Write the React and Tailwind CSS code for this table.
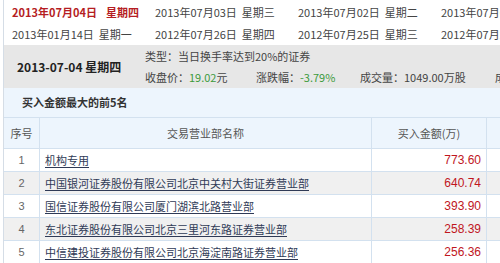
import React from "react";

const dates = [
  [
    { d: "2013年07月04日", w: "星期四", active: true },
    { d: "2013年07月03日", w: "星期三" },
    { d: "2013年07月02日", w: "星期二" },
    { d: "2013年07月01日", w: "星期一" },
  ],
  [
    { d: "2013年01月14日", w: "星期一" },
    { d: "2012年07月26日", w: "星期四" },
    { d: "2012年07月25日", w: "星期三" },
    { d: "2012年07月24日", w: "星期二" },
  ],
];

const rows = [
  { no: 1, name: "机构专用", amount: "773.60" },
  { no: 2, name: "中国银河证券股份有限公司北京中关村大街证券营业部", amount: "640.74" },
  { no: 3, name: "国信证券股份有限公司厦门湖滨北路营业部", amount: "393.90" },
  { no: 4, name: "东北证券股份有限公司北京三里河东路证券营业部", amount: "258.39" },
  { no: 5, name: "中信建投证券股份有限公司北京海淀南路证券营业部", amount: "256.36" },
];

export default function App() {
  return (
    <div
      className="w-[500px] h-[263px] overflow-hidden bg-white text-[11px] text-[#333]"
      style={{ fontFamily: '"Noto Sans CJK SC", "Liberation Sans", sans-serif' }}
    >
      <div className="ml-[3px] border-l border-[#d5dde6]">
        {/* date switcher */}
        <div className="h-[45px] pt-[1px]">
          {dates.map((line, i) => (
            <div key={i} className="flex h-[22px] items-center pl-[8px] whitespace-nowrap">
              {line.map((it, j) => (
                <div
                  key={j}
                  className={
                    "w-[143px] shrink-0 " +
                    (it.active ? "font-bold text-[#b51d23]" : "text-[#444]")
                  }
                >
                  {it.d}
                  <span className={it.active ? "ml-[9px]" : "ml-[5px]"}>{it.w}</span>
                </div>
              ))}
            </div>
          ))}
        </div>

        {/* summary band */}
        <div className="flex h-[43px] items-center bg-[#e7e7e7] whitespace-nowrap">
          <div className="w-[141px] shrink-0 pl-[13px] font-bold text-[12px] text-[#222]">2013-07-04 星期四</div>
          <div className="flex flex-col gap-[4px] text-[#444]">
            <div>类型：当日换手率达到20%的证券</div>
            <div className="flex">
              <span className="w-[111px]">
                收盘价：<span className="text-[#3c9a3c]">19.02</span>元
              </span>
              <span className="w-[104px]">
                涨跌幅：<span className="text-[#3c9a3c]">-3.79%</span>
              </span>
              <span className="w-[135px]">成交量：1049.00万股</span>
              <span>成交额：</span>
            </div>
          </div>
        </div>

        {/* ranking table */}
        <div className="bg-[#edf5fd]">
          <div className="flex h-[30px] items-center border-b border-[#d3e1ef] pl-[18px] font-bold text-[#333]">
            买入金额最大的前5名
          </div>
          <div className="grid grid-cols-[36px_332px_115px_1fr]">
            <div className="flex h-[31px] items-center justify-center border-b border-r border-[#d3e1ef] text-[#555]">序号</div>
            <div className="flex h-[31px] items-center justify-center border-b border-r border-[#d3e1ef] text-[#555]">交易营业部名称</div>
            <div className="flex h-[31px] items-center justify-center border-b border-r border-[#d3e1ef] text-[#555]">买入金额(万)</div>
            <div className="h-[31px] border-b border-[#d3e1ef]"></div>
            {rows.map((r) => {
              const bg = r.no % 2 === 0 ? "bg-[#f0f0f0]" : "bg-white";
              return (
                <React.Fragment key={r.no}>
                  <div className={"flex h-[23px] items-center justify-center border-b border-r border-[#d3e1ef] text-[#666] " + bg} style={{ fontFamily: '"Liberation Sans", sans-serif' }}>
                    {r.no}
                  </div>
                  <div className={"flex h-[23px] items-center border-b border-r border-[#d3e1ef] pl-[5px] whitespace-nowrap overflow-hidden " + bg}>
                    <span className="underline text-[#2f3a56] underline-offset-2">{r.name}</span>
                  </div>
                  <div className={"flex h-[23px] items-center justify-end border-b border-r border-[#d3e1ef] pr-[5px] text-[12px] text-[#c0161e] " + bg} style={{ fontFamily: '"Liberation Sans", sans-serif' }}>
                    {r.amount}
                  </div>
                  <div className={"h-[23px] border-b border-[#d3e1ef] " + bg}></div>
                </React.Fragment>
              );
            })}
          </div>
        </div>
      </div>
    </div>
  );
}
